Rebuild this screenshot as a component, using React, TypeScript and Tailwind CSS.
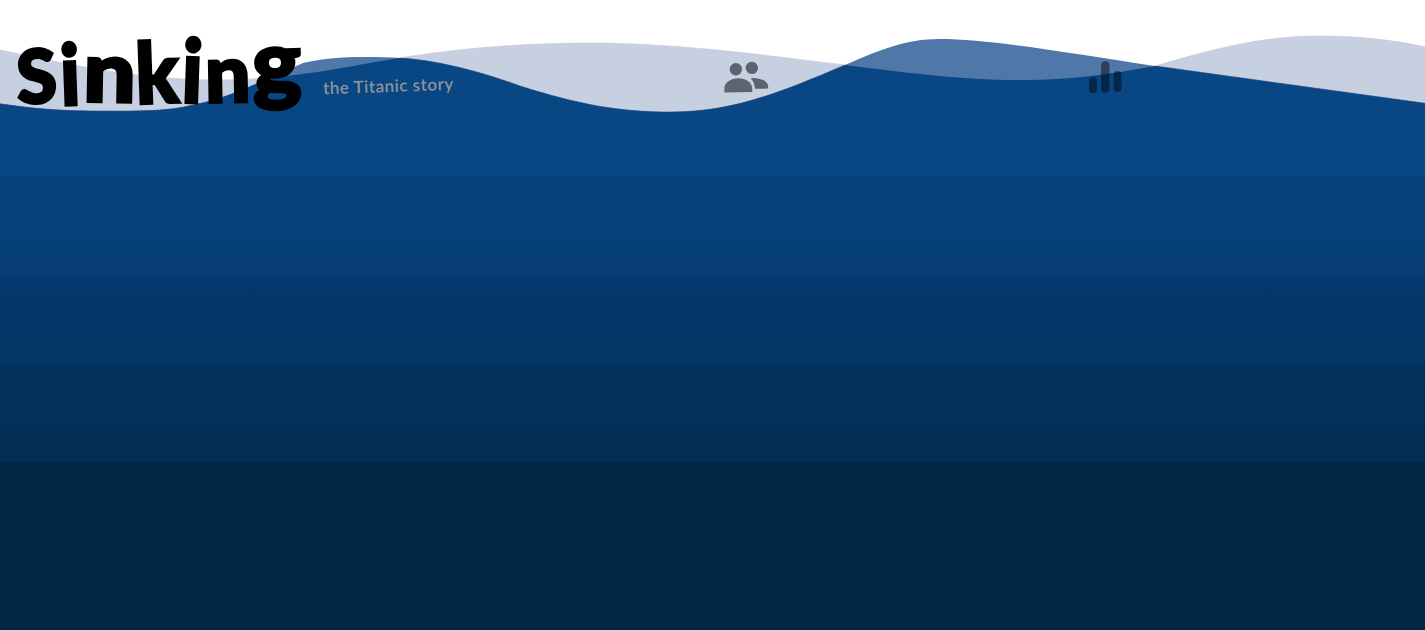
const letters = [
  { c: 'S', cls: 'text-[74px] -rotate-3 scale-x-[0.98] -ml-[1px] translate-y-[1px]' },
  { c: 'i', cls: 'text-[84px] -rotate-2 scale-x-90 ml-[2px] translate-y-[3px]' },
  { c: 'n', cls: 'text-[84px] rotate-1 scale-x-110 ml-[5px]' },
  { c: 'k', cls: 'text-[84px] -rotate-2 scale-x-[0.94] ml-[1px] translate-y-[1px]' },
  { c: 'i', cls: 'text-[88px] rotate-2 scale-x-90 ml-[1px] translate-y-[1px]' },
  { c: 'n', cls: 'text-[80px] -rotate-1 ml-[1px]' },
  { c: 'g', cls: 'text-[88px] -rotate-2 scale-x-105 ml-[3px] -translate-y-[8px]' },
];

const backWave =
  'M-5 49C60 62 130 80 220 80C290 80 350 66 405 57C470 47 530 43 590 43C680 43 770 56 845 65C910 73 960 80 1020 80C1080 80 1120 72 1155 66C1210 50 1260 36 1320 36C1360 36 1395 40 1430 48V140H-5Z';
const frontWave =
  'M-5 103C40 110 70 111 100 111C135 111 165 112 193 105C225 99 250 87 303 63C330 57 350 57 375 57C425 57 470 68 520 86C580 105 620 112 670 112C730 112 775 95 845 65C880 50 905 39 940 39C990 39 1070 53 1155 66L1430 104V140H-5Z';

// light back wave, mid front wave, and the part where they overlap
const Waves = () => (
  <svg className="absolute top-0 left-0 w-[1425px] h-[130px]" viewBox="0 0 1425 130" fill="none">
    <defs>
      <clipPath id="back-clip">
        <path d={backWave} />
      </clipPath>
    </defs>
    <path d={backWave} fill="#c6d0e0" stroke="#c8c3d8" strokeWidth="0.6" />
    <path d={frontWave} fill="#4f77a8" />
    <path d={frontWave} fill="#094684" stroke="#2a4a8c" strokeWidth="0.6" clipPath="url(#back-clip)" />
  </svg>
);

export default function App() {
  return (
    <div className="relative h-[630px] w-full overflow-hidden bg-white flex flex-col">
      <Waves />
      <header className="relative h-[130px] shrink-0 flex items-start pl-[17px]">
        <h1 className="flex items-baseline h-[130px] pt-[24px] font-['Lato',sans-serif] font-black leading-none text-black [-webkit-text-stroke:3px_black]">
          {letters.map((l, i) => (
            <span key={i} className={`inline-block ${l.cls}`}>
              {l.c}
            </span>
          ))}
        </h1>
        <p className="absolute left-[323px] top-[76px] -rotate-2 font-['Lato',sans-serif] text-[17px] leading-5 font-semibold tracking-[0.5px] text-[#8f949b]">
          the Titanic story
        </p>
        <nav className="absolute left-[724px] top-[61px]">
          <svg className="-rotate-1" width="45" height="32" viewBox="0 0 45 32" fill="#5d6470">
            <circle cx="12" cy="8" r="6.2" />
            <circle cx="28" cy="7" r="6.2" />
            <path d="M0 31V27C0 21 7 17 14 17C21 17 28 21 28 27V31Z" />
            <path d="M29 17C36 17 44 20.5 44 26V28H30.5V26C30.5 22.5 29 20 26.5 17.5Z" />
          </svg>
        </nav>
        <nav className="absolute left-[1089px] top-[61px]">
          <svg width="33" height="33" viewBox="0 0 33 33" fill="#000" fillOpacity="0.45">
            <rect x="0" y="16" width="8" height="16" rx="4" />
            <rect x="12" y="0" width="8.5" height="32" rx="4.2" />
            <rect x="24.5" y="10" width="8" height="21" rx="4" />
          </svg>
        </nav>
      </header>
      <main className="flex-1 flex flex-col">
        <div className="h-[47px] bg-[#094684]" />
        <div className="h-[98px] bg-gradient-to-b from-[#07427d] to-[#073e77]" />
        <div className="h-[87px] bg-gradient-to-b from-[#04396e] to-[#043564]" />
        <div className="h-[68px] bg-gradient-to-b from-[#04325e] to-[#033058]" />
        <div className="h-[32px] bg-[#032d53]" />
        <div className="flex-1 bg-[#022645]" />
      </main>
    </div>
  );
}
